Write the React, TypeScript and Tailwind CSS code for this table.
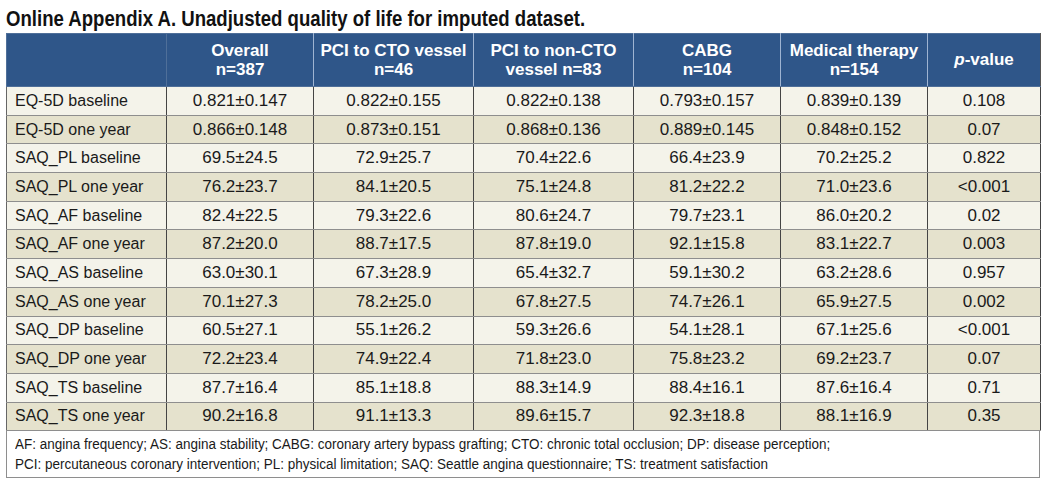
import React from 'react';

interface Row {
  label: string;
  values: string[];
}

const rows: Row[] = [
  { label: 'EQ-5D baseline', values: ['0.821±0.147', '0.822±0.155', '0.822±0.138', '0.793±0.157', '0.839±0.139', '0.108'] },
  { label: 'EQ-5D one year', values: ['0.866±0.148', '0.873±0.151', '0.868±0.136', '0.889±0.145', '0.848±0.152', '0.07'] },
  { label: 'SAQ_PL baseline', values: ['69.5±24.5', '72.9±25.7', '70.4±22.6', '66.4±23.9', '70.2±25.2', '0.822'] },
  { label: 'SAQ_PL one year', values: ['76.2±23.7', '84.1±20.5', '75.1±24.8', '81.2±22.2', '71.0±23.6', '<0.001'] },
  { label: 'SAQ_AF baseline', values: ['82.4±22.5', '79.3±22.6', '80.6±24.7', '79.7±23.1', '86.0±20.2', '0.02'] },
  { label: 'SAQ_AF one year', values: ['87.2±20.0', '88.7±17.5', '87.8±19.0', '92.1±15.8', '83.1±22.7', '0.003'] },
  { label: 'SAQ_AS baseline', values: ['63.0±30.1', '67.3±28.9', '65.4±32.7', '59.1±30.2', '63.2±28.6', '0.957'] },
  { label: 'SAQ_AS one year', values: ['70.1±27.3', '78.2±25.0', '67.8±27.5', '74.7±26.1', '65.9±27.5', '0.002'] },
  { label: 'SAQ_DP baseline', values: ['60.5±27.1', '55.1±26.2', '59.3±26.6', '54.1±28.1', '67.1±25.6', '<0.001'] },
  { label: 'SAQ_DP one year', values: ['72.2±23.4', '74.9±22.4', '71.8±23.0', '75.8±23.2', '69.2±23.7', '0.07'] },
  { label: 'SAQ_TS baseline', values: ['87.7±16.4', '85.1±18.8', '88.3±14.9', '88.4±16.1', '87.6±16.4', '0.71'] },
  { label: 'SAQ_TS one year', values: ['90.2±16.8', '91.1±13.3', '89.6±15.7', '92.3±18.8', '88.1±16.9', '0.35'] },
];

// header cells: two lines each
const headers: [string, string][] = [
  ['Overall', 'n=387'],
  ['PCI to CTO vessel', 'n=46'],
  ['PCI to non-CTO', 'vessel n=83'],
  ['CABG', 'n=104'],
  ['Medical therapy', 'n=154'],
];

export default function App() {
  return (
    <div className="w-[1045px] h-[481px] bg-white px-[6px] pt-[8px]" style={{ fontFamily: '"Liberation Sans", Arial, sans-serif' }}>
      <h1 className="text-[22px] leading-[22px] font-bold text-[#111] origin-left scale-x-[0.845] whitespace-nowrap">
        Online Appendix A. Unadjusted quality of life for imputed dataset.
      </h1>

      <table className="mt-[3px] w-[1034px] table-fixed border-collapse text-[17px] text-[#1a1a1a]">
        <colgroup>
          <col className="w-[160px]" />
          <col className="w-[147px]" />
          <col className="w-[160px]" />
          <col className="w-[160px]" />
          <col className="w-[147px]" />
          <col className="w-[147px]" />
          <col className="w-[113px]" />
        </colgroup>
        <thead>
          <tr className="h-[53px] bg-[#2f5689] text-white">
            <th className="border border-[#4f6f99]"></th>
            {headers.map(([a, b]) => (
              <th key={a} className="border-y border-[#4f6f99] border-x border-x-[#9fb4d2] text-[17px] leading-[19px] font-bold text-center">
                <div>{a}</div>
                <div>{b}</div>
              </th>
            ))}
            <th className="border-y border-[#4f6f99] border-l border-l-[#9fb4d2] border-r border-r-[#555] text-[17px] font-bold text-center">
              <span className="italic">p</span>-value
            </th>
          </tr>
        </thead>
        <tbody>
          {rows.map((row, idx) => (
            <tr key={row.label} className={`h-[28.7px] ${idx % 2 === 0 ? 'bg-[#f4f3ea]' : 'bg-[#e5e2cd]'}`}>
              <td className="border-y border-y-[#8e8e8e] border-l border-l-[#666] border-r border-r-[#444] pl-[8px] text-[16px] leading-[18px] whitespace-nowrap">
                {row.label}
              </td>
              {row.values.map((v, i) => (
                <td key={i} className="border-y border-y-[#8e8e8e] border-x border-x-[#444] text-center leading-[18px]">
                  {v}
                </td>
              ))}
            </tr>
          ))}
        </tbody>
      </table>

      <div className="w-[1034px] h-[47px] border border-t-0 border-[#8e8e8e] pl-[8px] pt-[3px] text-[15.5px] leading-[20px] text-[#1a1a1a]">
        <p className="origin-left scale-x-[0.87] whitespace-nowrap">AF: angina frequency; AS: angina stability; CABG: coronary artery bypass grafting; CTO: chronic total occlusion; DP: disease perception;</p>
        <p className="origin-left scale-x-[0.87] whitespace-nowrap">PCI: percutaneous coronary intervention; PL: physical limitation; SAQ: Seattle angina questionnaire; TS: treatment satisfaction</p>
      </div>
    </div>
  );
}
